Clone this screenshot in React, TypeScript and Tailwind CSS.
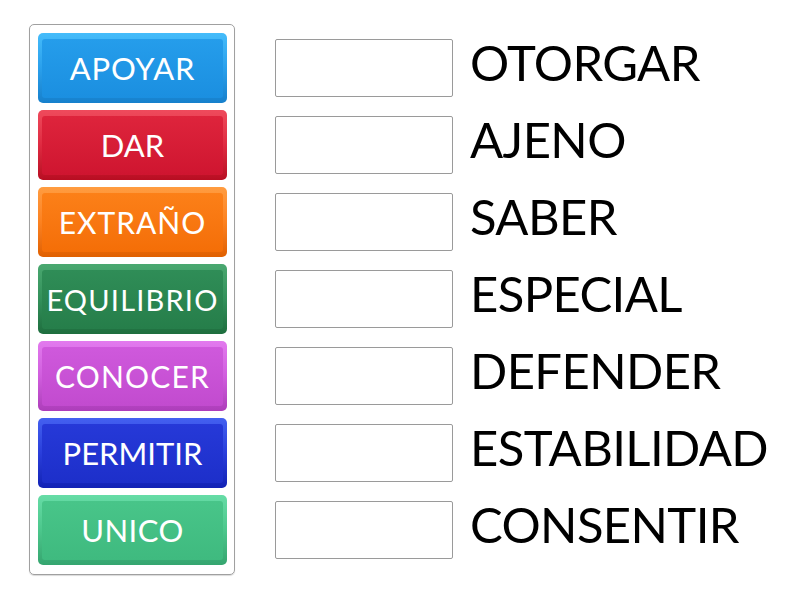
import React from "react";

type Btn = { label: string; rim: string; face: string; size: string };

const buttons: Btn[] = [
  { label: "APOYAR", rim: "bg-gradient-to-b from-[#45bcfa] via-[#2aa0ec] to-[#1680cc]", face: "bg-gradient-to-b from-[#259deb] to-[#1b8fe0]", size: "text-[31px] tracking-[0.8px]" },
  { label: "DAR", rim: "bg-gradient-to-b from-[#ef4a5c] via-[#df2a41] to-[#b80d22]", face: "bg-gradient-to-b from-[#de243c] to-[#cf1530]", size: "text-[31px]" },
  { label: "EXTRAÑO", rim: "bg-gradient-to-b from-[#ff9c40] via-[#fc8220] to-[#e06000]", face: "bg-gradient-to-b from-[#fc8018] to-[#f46e07]", size: "text-[30px] tracking-[1px]" },
  { label: "EQUILIBRIO", rim: "bg-gradient-to-b from-[#4aa870] via-[#33915b] to-[#1e6e3e]", face: "bg-gradient-to-b from-[#2f8d57] to-[#267e4a]", size: "text-[29px] tracking-[1.2px]" },
  { label: "CONOCER", rim: "bg-gradient-to-b from-[#e27aee] via-[#d15ede] to-[#ad3dba]", face: "bg-gradient-to-b from-[#cf59dc] to-[#c24bcf]", size: "text-[30px] tracking-[1.2px]" },
  { label: "PERMITIR", rim: "bg-gradient-to-b from-[#4460f0] via-[#2a3edb] to-[#1222b5]", face: "bg-gradient-to-b from-[#2639d8] to-[#1d2fca]", size: "text-[31px]" },
  { label: "UNICO", rim: "bg-gradient-to-b from-[#66dca6] via-[#4cc78c] to-[#35a56f]", face: "bg-gradient-to-b from-[#48c589] to-[#3fba7f]", size: "text-[31px] tracking-[0.5px]" },
];

const words = ["OTORGAR", "AJENO", "SABER", "ESPECIAL", "DEFENDER", "ESTABILIDAD", "CONSENTIR"];

export default function App() {
  return (
    <div className="w-[800px] h-[600px] bg-white flex items-start font-['Lato',sans-serif]">
      <div className="ml-[29px] mt-[24px] w-[206px] h-[551px] border border-[#a0a0a0] rounded-[5px] pt-[8px] pl-[8px] flex flex-col gap-[7px] shadow-[0_1px_1px_rgba(0,0,0,0.15)]">
        {buttons.map((b) => (
          <div key={b.label} className={`w-[189px] h-[70px] rounded-[5px] ${b.rim} pt-[6px] px-[4px] pb-[5px] flex`}>
            <div className={`flex-1 rounded-[3px] ${b.face} flex items-center justify-center text-white ${b.size} leading-none pb-[1px] whitespace-nowrap`}>
              {b.label}
            </div>
          </div>
        ))}
      </div>
      <div className="ml-[40px] mt-[39px] flex flex-col gap-[19px]">
        {words.map((w) => (
          <div key={w} className="flex items-center h-[58px]">
            <div className="w-[178px] h-[58px] border border-[#9a9a9a] rounded-[2px] bg-white" />
            <div className="ml-[17px] mb-[12px] text-[49px] tracking-[-0.6px] leading-none text-black whitespace-nowrap">{w}</div>
          </div>
        ))}
      </div>
    </div>
  );
}
